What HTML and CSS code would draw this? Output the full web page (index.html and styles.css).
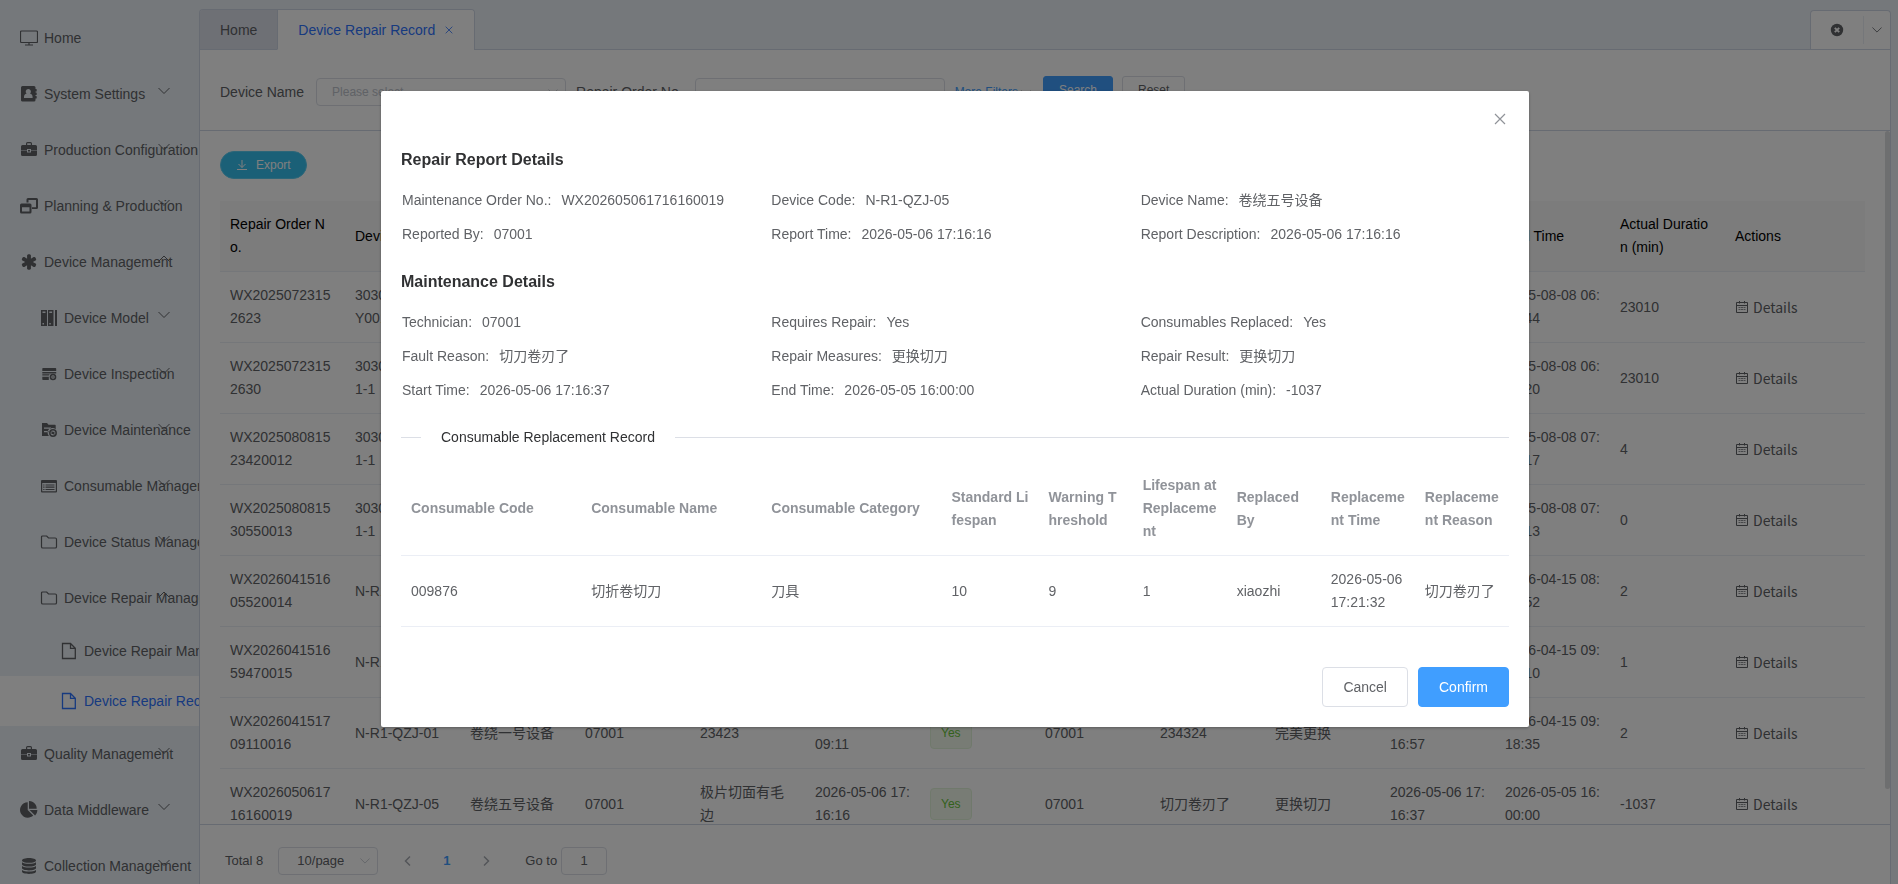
FILE: index.html
```html
<!DOCTYPE html>
<html lang="en">
<head>
<meta charset="utf-8">
<title>Device Repair Record</title>
<link rel="stylesheet" href="styles.css">
</head>
<body>
<svg class="sprite" aria-hidden="true">
  <symbol id="i-monitor" viewBox="0 0 18 18"><path d="M1.500 2h15a1 1 0 0 1 1 1v9.500a1 1 0 0 1-1 1h-15a1 1 0 0 1-1-1V3a1 1 0 0 1 1-1zM9 13.500V16M5 16h8" fill="none" stroke="currentColor" stroke-width="1.200"/></symbol>
  <symbol id="i-contacts" viewBox="0 0 18 18"><path fill="currentColor" fill-rule="evenodd" d="M2.500 1h11.500a1.500 1.500 0 0 1 1.500 1.500v1.500h.700a.500.500 0 0 1 .5.500v1.500a.500.500 0 0 1-.5.500h-.7v1h.700a.500.500 0 0 1 .5.500v1.500a.500.500 0 0 1-.5.500h-.7v1h.700a.500.500 0 0 1 .5.500v1.500a.500.500 0 0 1-.5.500h-.7v1.500a1.500 1.500 0 0 1-1.500 1.500H2.500A1.500 1.500 0 0 1 1 15.500v-13A1.500 1.500 0 0 1 2.500 1zM8.300 4a2.600 2.600 0 0 0-1.700 4.600C4.900 9 4 10.300 4 12v1h8.600v-1c0-1.700-.9-3-2.600-3.400A2.600 2.600 0 0 0 8.300 4z"/></symbol>
  <symbol id="i-case" viewBox="0 0 18 18"><path fill="currentColor" fill-rule="evenodd" d="M6 4V2.500A1.500 1.500 0 0 1 7.500 1h3A1.500 1.500 0 0 1 12 2.500V4h3.500A1.500 1.500 0 0 1 17 5.500V9h-6V8H7v1H1V5.500A1.500 1.500 0 0 1 2.500 4zM7.200 4h3.600V2.200H7.200zM1 9.600h6v1.900h4V9.600h6v3.900a1.500 1.500 0 0 1-1.500 1.500h-13A1.500 1.500 0 0 1 1 13.500zM8 9h2v1.500H8z"/></symbol>
  <symbol id="i-windows" viewBox="0 0 18 18"><path fill="currentColor" fill-rule="evenodd" d="M8 1h8.500A1.500 1.500 0 0 1 18 2.500v8a1.500 1.500 0 0 1-1.500 1.500H12v-1.800h4V3H8.500v2.500H6.500v-3A1.500 1.500 0 0 1 8 1zM1.500 6.500h8.500A1.500 1.500 0 0 1 11.500 8v7a1.500 1.500 0 0 1-1.500 1.500H1.500A1.500 1.500 0 0 1 0 15V8a1.500 1.500 0 0 1 1.500-1.500zM2 10.200v4.300h7.500v-4.300z"/></symbol>
  <symbol id="i-asterisk" viewBox="0 0 1792 1792"><path fill="currentColor" d="M1546 1050q46 26 59.500 77.500t-12.500 97.500l-64 110q-26 46-77.500 59.500t-97.500-12.500l-266-153v307q0 52-38 90t-90 38h-128q-52 0-90-38t-38-90v-307l-266 153q-46 26-97.500 12.500t-77.500-59.500l-64-110q-26-46-12.500-97.500t59.500-77.500l266-154-266-154q-46-26-59.500-77.500t12.500-97.500l64-110q26-46 77.500-59.500t97.500 12.500l266 153v-307q0-52 38-90t90-38h128q52 0 90 38t38 90v307l266-153q46-26 97.500-12.500t77.500 59.500l64 110q26 46 12.500 97.500t-59.500 77.500l-266 154z"/></symbol>
  <symbol id="i-binders" viewBox="0 0 18 18"><path fill="currentColor" fill-rule="evenodd" d="M1 1h6v16H1zM2.500 2.500V4h3V2.500zM2.500 14v1.500h1.500V14zM8 1h5.500v16H8zM9.300 2.500V4h2.800V2.500zM9.300 14v1.500h1.500V14zM15 1h2v16h-2z"/></symbol>
  <symbol id="i-inspect" viewBox="0 0 18 18"><path fill="currentColor" d="M3 3h12.500a.700.700 0 0 1 .700.700V6H2.300V3.700A.700.700 0 0 1 3 3zM2.300 7h13.900v1.500H2.300zM2.300 9.200h7.500l-1 1.300H2.300zM2.300 11.700h6.500v3.300H3a.700.700 0 0 1-.7-.7z"/><circle cx="13" cy="12" r="2.500" fill="none" stroke="currentColor" stroke-width="1.600"/><circle cx="13" cy="12" r=".8" fill="currentColor"/></symbol>
  <symbol id="i-maintain" viewBox="0 0 18 18"><path fill="currentColor" fill-rule="evenodd" d="M2 2h5l1.500 1.800h6.500a.700.700 0 0 1 .7.700V8.300a4.500 4.500 0 0 0-6.800 6.700H2zM4 6.500v1.300h7V6.500zM4 10v1.300h4.500V10z"/><circle cx="13" cy="12" r="3.200" fill="none" stroke="currentColor" stroke-width="1.500"/><path d="M11.500 10.500l3 3m0-2.500l-3 1.500" stroke="currentColor" stroke-width="1.100"/></symbol>
  <symbol id="i-list" viewBox="0 0 18 18"><path fill="currentColor" fill-rule="evenodd" d="M2 3h14a1 1 0 0 1 1 1v10.500a1 1 0 0 1-1 1H2a1 1 0 0 1-1-1V4a1 1 0 0 1 1-1zM2.200 6v8.300h13.600V6z"/><path d="M3.200 8h1.300M5.500 8h9M3.200 10.200h1.300M5.500 10.200h9M3.200 12.500h1.300M5.500 12.500h9" stroke="currentColor" stroke-width="1.200"/></symbol>
  <symbol id="i-folder" viewBox="0 0 18 18"><path d="M2.500 3h4.200l1.800 2h6.700a1.300 1.300 0 0 1 1.300 1.300v7.400a1.300 1.300 0 0 1-1.300 1.300H2.800a1.300 1.300 0 0 1-1.300-1.300V4a1 1 0 0 1 1-1z" fill="none" stroke="currentColor" stroke-width="1.200"/></symbol>
  <symbol id="i-file" viewBox="0 0 18 18"><path d="M2.500 1.500h8l4.800 4.800v10.200H2.500zM10.500 1.500v4.800h4.800" fill="none" stroke="currentColor" stroke-width="1.300"/></symbol>
  <symbol id="i-pie" viewBox="0 0 1792 1792"><path fill="currentColor" d="M768 890l546 546q-106 108-247.500 168t-298.500 60q-209 0-385.500-103t-279.500-279.500-103-385.500 103-385.500 279.500-279.500 385.500-103v762zm187 6h773q0 157-60 298.500t-168 247.500zm709-128h-768v-768q209 0 385.500 103t279.500 279.500 103 385.500z"/></symbol>
  <symbol id="i-database" viewBox="0 0 18 18"><path fill="currentColor" d="M9 1c4 0 7 1 7 2.400S13 5.800 9 5.800 2 4.800 2 3.400 5 1 9 1zM2 5.300c1.300 1 4 1.500 7 1.500s5.700-.5 7-1.500v1.900c0 1.400-3 2.400-7 2.400S2 8.600 2 7.200zM2 9.100c1.300 1 4 1.500 7 1.500s5.700-.5 7-1.500V11c0 1.400-3 2.400-7 2.400S2 12.400 2 11zM2 12.900c1.300 1 4 1.500 7 1.500s5.700-.5 7-1.500v1.700c0 1.400-3 2.400-7 2.400s-7-1-7-2.400z"/></symbol>
  <symbol id="i-down" viewBox="0 0 12 12"><path d="M.500 3l5.500 5.500L11.500 3" fill="none" stroke="currentColor"/></symbol>
  <symbol id="i-up" viewBox="0 0 12 12"><path d="M.500 8.500L6 3l5.500 5.500" fill="none" stroke="currentColor"/></symbol>
  <symbol id="i-left" viewBox="0 0 12 12"><path d="M8 1.500L3.500 6 8 10.500" fill="none" stroke="currentColor" stroke-width="1.500"/></symbol>
  <symbol id="i-right" viewBox="0 0 12 12"><path d="M4 1.500L8.500 6 4 10.500" fill="none" stroke="currentColor" stroke-width="1.500"/></symbol>
  <symbol id="i-x" viewBox="0 0 12 12"><path d="M1 1l10 10M11 1L1 11" fill="none" stroke="currentColor" stroke-width="1.200"/></symbol>
  <symbol id="i-circle-x" viewBox="0 0 14 14"><circle cx="7" cy="7" r="6.200" fill="currentColor"/><path d="M4.800 4.800l4.400 4.400M9.200 4.800L4.800 9.200" stroke="#fff" stroke-width="1.900"/></symbol>
  <symbol id="i-download" viewBox="0 0 12 12"><path d="M6 1v7.500M2.500 5L6 8.500 9.500 5M1 10.500h10" fill="none" stroke="currentColor"/></symbol>
  <symbol id="i-calendar" viewBox="0 0 14 14"><path d="M1.500 2.500h11v10h-11zM1.500 5.500h11M4.500 1v2.500M9.500 1v2.500" fill="none" stroke="currentColor"/><path d="M3.500 7.500h2M6 7.500h2M8.500 7.500h2M3.500 9.500h2M6 9.500h2M8.500 9.500h2" stroke="currentColor" stroke-opacity=".7"/></symbol>
</svg>

<div class="app">
  <nav class="sidebar" aria-label="Main menu">
    <ul class="menu">
      <li><a href="#" class="item"><svg class="ico"><use href="#i-monitor"/></svg>Home</a></li>
      <li><a href="#" class="item"><svg class="ico"><use href="#i-contacts"/></svg>System Settings<svg class="arrow"><use href="#i-down"/></svg></a></li>
      <li><a href="#" class="item"><svg class="ico"><use href="#i-case"/></svg>Production Configuration<svg class="arrow"><use href="#i-down"/></svg></a></li>
      <li><a href="#" class="item"><svg class="ico"><use href="#i-windows"/></svg>Planning &amp; Production<svg class="arrow"><use href="#i-down"/></svg></a></li>
      <li><a href="#" class="item"><svg class="ico"><use href="#i-asterisk"/></svg>Device Management<svg class="arrow"><use href="#i-up"/></svg></a>
        <ul class="menu level-2">
          <li><a href="#" class="item"><svg class="ico"><use href="#i-binders"/></svg>Device Model<svg class="arrow"><use href="#i-down"/></svg></a></li>
          <li><a href="#" class="item"><svg class="ico"><use href="#i-inspect"/></svg>Device Inspection<svg class="arrow"><use href="#i-down"/></svg></a></li>
          <li><a href="#" class="item"><svg class="ico"><use href="#i-maintain"/></svg>Device Maintenance<svg class="arrow"><use href="#i-down"/></svg></a></li>
          <li><a href="#" class="item"><svg class="ico"><use href="#i-list"/></svg>Consumable Management<svg class="arrow"><use href="#i-down"/></svg></a></li>
          <li><a href="#" class="item"><svg class="ico"><use href="#i-folder"/></svg>Device Status Management<svg class="arrow"><use href="#i-down"/></svg></a></li>
          <li><a href="#" class="item"><svg class="ico"><use href="#i-folder"/></svg>Device Repair Management<svg class="arrow"><use href="#i-up"/></svg></a>
            <ul class="menu level-3">
              <li><a href="#" class="item"><svg class="ico"><use href="#i-file"/></svg>Device Repair Management</a></li>
              <li><a href="#" class="item active"><svg class="ico"><use href="#i-file"/></svg>Device Repair Record</a></li>
            </ul>
          </li>
        </ul>
      </li>
      <li><a href="#" class="item"><svg class="ico"><use href="#i-case"/></svg>Quality Management<svg class="arrow"><use href="#i-down"/></svg></a></li>
      <li><a href="#" class="item"><svg class="ico"><use href="#i-pie"/></svg>Data Middleware<svg class="arrow"><use href="#i-down"/></svg></a></li>
      <li><a href="#" class="item"><svg class="ico"><use href="#i-database"/></svg>Collection Management<svg class="arrow"><use href="#i-down"/></svg></a></li>
    </ul>
  </nav>

  <div class="main">
    <div class="tabbar">
      <div class="tabs">
        <a href="#" class="tab">Home</a>
        <a href="#" class="tab current">Device Repair Record<svg class="tab-x"><use href="#i-x"/></svg></a>
      </div>
      <div class="tab-tools">
        <button type="button" class="tool-close" aria-label="Close all"><svg><use href="#i-circle-x"/></svg></button>
        <button type="button" class="tool-more" aria-label="More"><svg><use href="#i-down"/></svg></button>
      </div>
    </div>

    <div class="page">
      <form class="filters">
        <label for="dev">Device Name</label>
        <span class="select wide"><select id="dev"><option>Please select</option></select><svg><use href="#i-down"/></svg></span>
        <label for="ord">Repair Order No.</label>
        <input id="ord" class="input wide" type="text">
        <a href="#" class="more">More Filters<svg><use href="#i-down"/></svg></a>
        <div class="filter-actions">
          <button type="button" class="btn-sm primary">Search</button>
          <button type="button" class="btn-sm">Reset</button>
        </div>
      </form>

      <div class="content">
        <button type="button" class="export"><svg><use href="#i-download"/></svg>Export</button>
        <table class="records">
          <colgroup><col class="c-order"><col><col><col><col><col><col><col><col><col><col><col><col><col class="c-act"></colgroup>
          <thead><tr><th>Repair Order No.</th><th>Device Code</th><th>Device Name</th><th>Reported By</th><th>Report Description</th><th>Report Time</th><th>Requires Repair</th><th>Technician</th><th>Fault Reason</th><th>Repair Measures</th><th>Start Time</th><th>End Time</th><th>Actual Duration (min)</th><th>Actions</th></tr></thead>
          <tbody>
            <tr><td>WX20250723152623</td><td>303001<br>Y001</td><td>卷绕设备</td><td>07001</td><td>23423</td><td>2025-07-23 15:26:23</td><td><span class="tag">Yes</span></td><td>07001</td><td>234324</td><td>完美更换</td><td>2025-07-23 15:26:44</td><td>2025-08-08 06:56:44</td><td>23010</td><td><a href="#" class="details"><svg><use href="#i-calendar"/></svg>Details</a></td></tr>
            <tr><td>WX20250723152630</td><td>303001<br>1-1</td><td>卷绕设备</td><td>07001</td><td>23423</td><td>2025-07-23 15:26:30</td><td><span class="tag">Yes</span></td><td>07001</td><td>234324</td><td>完美更换</td><td>2025-07-23 15:27:20</td><td>2025-08-08 06:57:20</td><td>23010</td><td><a href="#" class="details"><svg><use href="#i-calendar"/></svg>Details</a></td></tr>
            <tr><td>WX202508081523420012</td><td>303001<br>1-1</td><td>卷绕设备</td><td>07001</td><td>23423</td><td>2025-08-08 15:23:42</td><td><span class="tag">Yes</span></td><td>07001</td><td>234324</td><td>完美更换</td><td>2025-08-08 07:24:17</td><td>2025-08-08 07:28:17</td><td>4</td><td><a href="#" class="details"><svg><use href="#i-calendar"/></svg>Details</a></td></tr>
            <tr><td>WX202508081530550013</td><td>303001<br>1-1</td><td>卷绕设备</td><td>07001</td><td>23423</td><td>2025-08-08 15:30:55</td><td><span class="tag">Yes</span></td><td>07001</td><td>234324</td><td>完美更换</td><td>2025-08-08 07:31:13</td><td>2025-08-08 07:31:13</td><td>0</td><td><a href="#" class="details"><svg><use href="#i-calendar"/></svg>Details</a></td></tr>
            <tr><td>WX202604151605520014</td><td>N-R1-QZJ-01</td><td>卷绕一号设备</td><td>07001</td><td>23423</td><td>2026-04-15 16:05:52</td><td><span class="tag">Yes</span></td><td>07001</td><td>234324</td><td>完美更换</td><td>2026-04-15 08:06:52</td><td>2026-04-15 08:08:52</td><td>2</td><td><a href="#" class="details"><svg><use href="#i-calendar"/></svg>Details</a></td></tr>
            <tr><td>WX202604151659470015</td><td>N-R1-QZJ-01</td><td>卷绕一号设备</td><td>07001</td><td>23423</td><td>2026-04-15 16:59:47</td><td><span class="tag">Yes</span></td><td>07001</td><td>234324</td><td>完美更换</td><td>2026-04-15 09:00:10</td><td>2026-04-15 09:01:10</td><td>1</td><td><a href="#" class="details"><svg><use href="#i-calendar"/></svg>Details</a></td></tr>
            <tr><td>WX202604151709110016</td><td>N-R1-QZJ-01</td><td>卷绕一号设备</td><td>07001</td><td>23423</td><td>2026-04-15 17:09:11</td><td><span class="tag">Yes</span></td><td>07001</td><td>234324</td><td>完美更换</td><td>2026-04-15 09:16:57</td><td>2026-04-15 09:18:35</td><td>2</td><td><a href="#" class="details"><svg><use href="#i-calendar"/></svg>Details</a></td></tr>
            <tr><td>WX202605061716160019</td><td>N-R1-QZJ-05</td><td>卷绕五号设备</td><td>07001</td><td>极片切面有毛边</td><td>2026-05-06 17:16:16</td><td><span class="tag">Yes</span></td><td>07001</td><td>切刀卷刃了</td><td>更换切刀</td><td>2026-05-06 17:16:37</td><td>2026-05-05 16:00:00</td><td>-1037</td><td><a href="#" class="details"><svg><use href="#i-calendar"/></svg>Details</a></td></tr>
          </tbody>
        </table>
        <div class="scrollbar"></div>
      </div>

      <div class="pager">
        <span>Total 8</span>
        <span class="select size"><select aria-label="Page size"><option>10/page</option></select><svg><use href="#i-down"/></svg></span>
        <button type="button" class="page-btn" aria-label="Previous page"><svg><use href="#i-left"/></svg></button>
        <button type="button" class="page-btn on">1</button>
        <button type="button" class="page-btn" aria-label="Next page"><svg><use href="#i-right"/></svg></button>
        <label for="goto">Go to</label>
        <input id="goto" class="input goto" type="text" value="1">
      </div>
    </div>
  </div>
</div>

<div class="overlay">
  <section class="dialog" role="dialog" aria-modal="true" aria-label="Repair Report Details">
    <button type="button" class="dialog-x" aria-label="Close"><svg><use href="#i-x"/></svg></button>
    <h2>Repair Report Details</h2>
    <dl class="facts">
      <div><dt>Maintenance Order No.:</dt><dd>WX202605061716160019</dd></div>
      <div><dt>Device Code:</dt><dd>N-R1-QZJ-05</dd></div>
      <div><dt>Device Name:</dt><dd>卷绕五号设备</dd></div>
      <div><dt>Reported By:</dt><dd>07001</dd></div>
      <div><dt>Report Time:</dt><dd>2026-05-06 17:16:16</dd></div>
      <div><dt>Report Description:</dt><dd>2026-05-06 17:16:16</dd></div>
    </dl>
    <h2>Maintenance Details</h2>
    <dl class="facts">
      <div><dt>Technician:</dt><dd>07001</dd></div>
      <div><dt>Requires Repair:</dt><dd>Yes</dd></div>
      <div><dt>Consumables Replaced:</dt><dd>Yes</dd></div>
      <div><dt>Fault Reason:</dt><dd>切刀卷刃了</dd></div>
      <div><dt>Repair Measures:</dt><dd>更换切刀</dd></div>
      <div><dt>Repair Result:</dt><dd>更换切刀</dd></div>
      <div><dt>Start Time:</dt><dd>2026-05-06 17:16:37</dd></div>
      <div><dt>End Time:</dt><dd>2026-05-05 16:00:00</dd></div>
      <div><dt>Actual Duration (min):</dt><dd>-1037</dd></div>
    </dl>
    <div class="divider">Consumable Replacement Record</div>
    <table class="consumables">
      <colgroup><col class="w-l"><col class="w-l"><col class="w-l"><col class="w-m"><col><col><col><col><col></colgroup>
      <thead><tr><th>Consumable Code</th><th>Consumable Name</th><th>Consumable Category</th><th>Standard Lifespan</th><th>Warning Threshold</th><th>Lifespan at Replacement</th><th>Replaced By</th><th>Replacement Time</th><th>Replacement Reason</th></tr></thead>
      <tbody><tr><td>009876</td><td>切折卷切刀</td><td>刀具</td><td>10</td><td>9</td><td>1</td><td>xiaozhi</td><td>2026-05-06 17:21:32</td><td>切刀卷刃了</td></tr></tbody>
    </table>
    <div class="dialog-foot">
      <button type="button" class="btn">Cancel</button>
      <button type="button" class="btn primary">Confirm</button>
    </div>
  </section>
</div>
</body>
</html>
```

FILE: styles.css
```css
* { box-sizing: border-box; }
body {
  margin: 0;
  font-family: "Liberation Sans", "Noto Sans CJK SC", sans-serif;
  font-size: 14px;
  color: #606266;
  background: #ebf1f6;
}
a { color: inherit; text-decoration: none; }
button, input, select { font-family: inherit; color: inherit; margin: 0; }
button { background: none; border: 0; padding: 0; }
ul, dl, dd, h2 { margin: 0; padding: 0; }
ul { list-style: none; }
.sprite { display: none; }

.app { display: flex; height: 100vh; overflow: hidden; }

/* Sidebar */
.sidebar { width: 199px; flex: none; padding-top: 10px; overflow: hidden; }
.item {
  position: relative;
  display: flex;
  align-items: center;
  height: 56px;
  padding-left: 20px;
  white-space: nowrap;
}
.level-2 .item { padding-left: 40px; }
.level-3 .item { padding-left: 60px; height: 50px; }
.ico { width: 18px; height: 18px; flex: none; margin-right: 6px; }
.arrow { position: absolute; top: 19px; right: 29px; width: 12px; height: 12px; }
.item.active { background: #fff; color: #2f74ff; }

/* Tabs */
.main { flex: 1; min-width: 0; display: flex; flex-direction: column; padding: 9px 7px 0 0; }
.tabbar { display: flex; justify-content: space-between; height: 41px; flex: none; border-bottom: 1px solid #cfd7e5; }
.tabs { display: flex; height: 41px; border: 1px solid #cfd7e5; border-bottom: 0; border-radius: 4px 4px 0 0; overflow: hidden; }
.tab { display: flex; align-items: center; padding: 0 20px; background: #dce0ea; border-bottom: 1px solid #cfd7e5; }
.tab.current { background: #fff; color: #2f74ff; border-bottom-color: #fff; border-left: 1px solid #cfd7e5; }
.tab-x { width: 8px; height: 8px; margin: 0 1px 0 10px; }
.tab-tools { display: flex; align-items: center; margin-top: 1px; background: #fff; border: 1px solid #cfd7e5; border-bottom: 0; border-radius: 4px 4px 0 0; }
.tool-close { width: 53px; height: 28px; border-right: 1px solid #ebeef5; display: grid; place-items: center; }
.tool-close svg { width: 14px; height: 14px; }
.tool-more { width: 26px; display: grid; place-items: center; }
.tool-more svg { width: 10px; height: 10px; }

/* Page */
.page {
  flex: 1;
  min-height: 0;
  display: flex;
  flex-direction: column;
  background: #fff;
  border: 1px solid #cfd7e5;
  border-width: 0 1px;
}
.filters { display: flex; align-items: center; flex: none; height: 81px; padding: 4px 20px 0; border-bottom: 1px solid #cfd7e5; }
.filters label { margin-right: 12px; }
.wide { width: 250px; margin-right: 10px; }
.input, .select select {
  height: 28px;
  border: 1px solid #dcdfe6;
  border-radius: 4px;
  background: #fff;
  padding: 0 15px;
  font-size: 12px;
}
.select { position: relative; display: inline-flex; }
.select select { appearance: none; width: 100%; }
.select svg { position: absolute; right: 8px; top: 9px; width: 10px; height: 10px; color: #c0c4cc; }
#dev { color: #c0c4cc; }
.more { color: #409eff; font-size: 12px; }
.more svg { width: 10px; height: 10px; margin-left: 3px; color: #909399; vertical-align: middle; }
.filter-actions { display: flex; gap: 9px; margin: 0 0 4px 12px; }
.btn-sm { height: 28px; padding: 0 15px; border: 1px solid #dcdfe6; border-radius: 3px; background: #fff; font-size: 12px; }
.primary.btn-sm, .primary.btn { background: #409eff; border-color: #409eff; color: #fff; }

.content { flex: 1; min-height: 0; overflow: hidden; position: relative; padding: 20px 25px 0 20px; }
.export {
  display: flex;
  align-items: center;
  gap: 8px;
  height: 28px;
  padding: 0 15px;
  border: 1px solid #5accf1;
  border-radius: 14px;
  background: #36c0ee;
  color: #fff;
  font-size: 12px;
  margin-bottom: 22px;
}
.export svg { width: 12px; height: 12px; }
table { width: 100%; table-layout: fixed; border-collapse: separate; border-spacing: 0; }
th, td { padding: 12px 10px; line-height: 23px; text-align: left; vertical-align: middle; word-break: break-all; border-bottom: 1px solid #ebeef5; }
.records col { width: 115px; }
.records .c-order { width: 125px; }
.records .c-act { width: 140px; }
.records th { background: #f8f8f9; color: #000; font-weight: 400; }
.tag { display: inline-block; height: 32px; line-height: 30px; padding: 0 10px; font-size: 12px; color: #67c23a; background: #f0f9eb; border: 1px solid #e1f3d8; border-radius: 4px; vertical-align: middle; }
.details { display: inline-flex; align-items: center; gap: 4px; font-family: "Noto Sans CJK SC", sans-serif; vertical-align: middle; }
.details svg { width: 14px; height: 14px; }
.scrollbar { position: absolute; top: 0; right: 0; width: 5px; height: 95%; border-radius: 3px; background: #dddee0; }

.pager { display: flex; align-items: center; flex: none; height: 60px; padding: 12px 25px 0; border-top: 1px solid #cfd7e5; font-size: 13px; }
.size { width: 100px; margin: 0 10px 0 15px; }
.select.size select { font-size: 13px; text-align: center; padding: 0 30px 0 15px; }
.page-btn { width: 39px; font-size: 13px; display: grid; place-items: center; }
.page-btn svg { width: 12px; height: 12px; color: #a8abb2; }
.page-btn.on { color: #409eff; font-weight: 700; }
.pager label { margin: 0 4px 0 20px; }
.goto { width: 46px; padding: 0; text-align: center; font-size: 13px; }

/* Dialog */
.overlay { position: fixed; inset: 0; padding: 91px 369px 0 381px; background: rgba(0, 0, 0, .5); }
.dialog { position: relative; padding: 57px 20px 20px; background: #fff; border-radius: 2px; box-shadow: 0 1px 3px rgba(0, 0, 0, .3); }
.dialog-x { position: absolute; top: 22px; right: 23px; width: 12px; height: 12px; color: #909399; }
.dialog-x svg { display: block; width: 12px; height: 12px; }
.dialog h2 { font-size: 16px; line-height: 24px; color: #303133; }
.facts { display: grid; grid-template-columns: repeat(3, 1fr); margin: 11px 0 19px; }
.facts div { display: flex; gap: 10px; line-height: 34px; height: 34px; padding-left: 1px; }
.divider { display: flex; align-items: center; gap: 20px; color: #303133; line-height: 20px; margin-top: 20px; }
.divider::before, .divider::after { content: ""; height: 1px; background: #dcdfe6; width: 20px; }
.divider::after { flex: 1; }
.consumables { margin-top: 15px; }
.consumables col { width: 94px; }
.consumables .w-l { width: 180px; }
.consumables .w-m { width: 97px; }
.consumables th { color: #909399; font-weight: 700; }
.dialog-foot { display: flex; justify-content: flex-end; gap: 10px; margin-top: 40px; }
.btn { height: 40px; padding: 0 20px; border: 1px solid #dcdfe6; border-radius: 4px; background: #fff; font-size: 14px; }
```
